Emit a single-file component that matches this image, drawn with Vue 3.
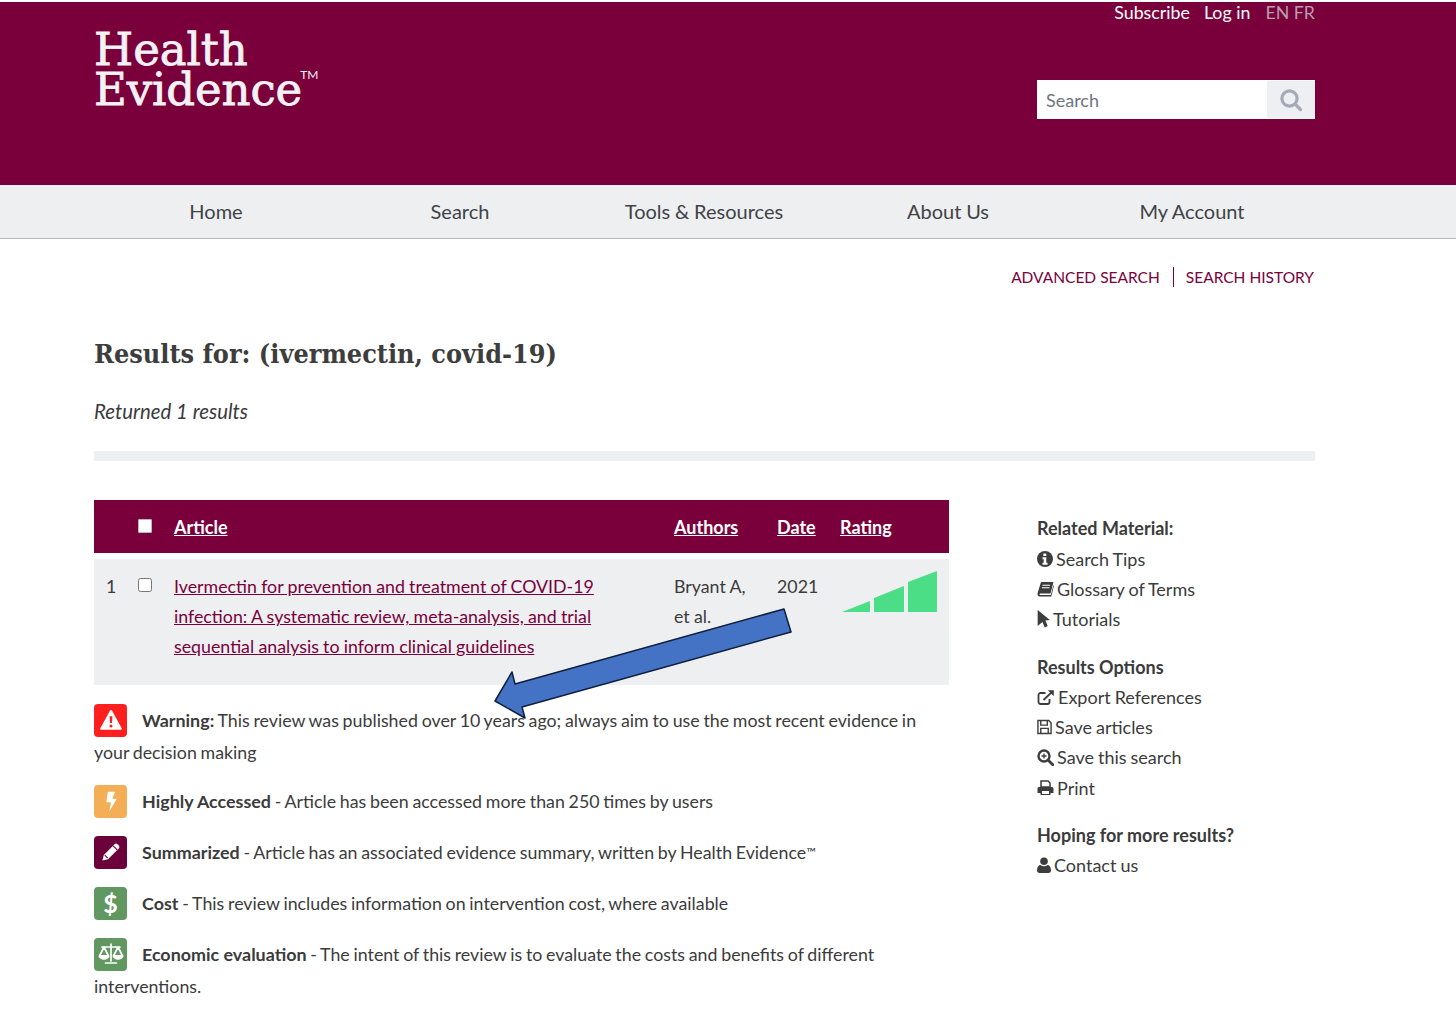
<script setup>
const navItems = ['Home', 'Search', 'Tools & Resources', 'About Us', 'My Account']
</script>

<template>
  <div class="page">
    <header class="masthead">
      <div class="masthead-inner">
        <div class="logo">
          <span class="logo-line">Health</span>
          <span class="logo-line">Evidence<sup class="tm">TM</sup></span>
        </div>
        <div class="masthead-tools">
          <div class="toplinks">
            <a class="toplink">Subscribe</a>
            <a class="toplink">Log in</a>
            <span class="lang">EN FR</span>
          </div>
          <div class="searchbox">
            <span class="searchbox-input">Search</span>
            <span class="searchbox-btn">
              <svg width="24" height="24" viewBox="0 0 24 24" fill="none" stroke="#a5a9b8" stroke-width="3.2" stroke-linecap="round"><circle cx="10.5" cy="10.5" r="7.6"/><path d="M16.2 16.2 21.5 21.5"/></svg>
            </span>
          </div>
        </div>
      </div>
    </header>

    <nav class="mainnav">
      <a v-for="item in navItems" :key="item" class="mainnav-item">{{ item }}</a>
    </nav>

    <main class="content">
      <div class="sublinks">
        <a class="sublink first">ADVANCED SEARCH</a>
        <a class="sublink">SEARCH HISTORY</a>
      </div>
      <h1 class="title">Results for: (ivermectin, covid-19)</h1>
      <p class="returned">Returned 1 results</p>
      <div class="rule"></div>

      <div class="columns">
        <section class="results">
          <div class="thead">
            <span class="col-num"></span>
            <span class="col-check"><span class="box box-head"></span></span>
            <a class="col-article">Article</a>
            <a class="col-authors">Authors</a>
            <a class="col-date">Date</a>
            <a class="col-rating">Rating</a>
          </div>
          <div class="trow">
            <span class="col-num">1</span>
            <span class="col-check"><span class="box"></span></span>
            <a class="col-article article-link">Ivermectin for prevention and treatment of COVID-19 infection: A systematic review, meta-analysis, and trial sequential analysis to inform clinical guidelines</a>
            <span class="col-authors">Bryant A, et al.</span>
            <span class="col-date">2021</span>
            <span class="col-rating">
              <svg class="rating" width="97" height="44" viewBox="0 0 97 44">
                <path d="M0 42 28 31V42Z" fill="#4cdd87"/>
                <path d="M32 28 62 16V42H32Z" fill="#4cdd87"/>
                <path d="M66 12 95 1V42H66Z" fill="#4cdd87"/>
              </svg>
            </span>
          </div>

          <div class="legend">
            <p class="legend-item">
              <span class="badge red"><svg viewBox="0 0 24 24" width="26" height="26"><path d="M12 3.800 21 20H3Z" fill="#fff" stroke="#fff" stroke-width="2" stroke-linejoin="round"/><path d="M10.700 8.600h2.600l-.4 6.200h-1.800Z" fill="#ff1f1f"/><circle cx="12" cy="17.500" r="1.400" fill="#ff1f1f"/></svg></span><strong>Warning:</strong> This review was published over 10 years ago; always aim to use the most recent evidence in your decision making
            </p>
            <p class="legend-item">
              <span class="badge orange"><svg viewBox="0 0 24 24" width="28" height="28"><path d="M9.300 4h6.200l-2.400 6h3.900l-6.500 11 1.500-8H8Z" fill="#fff"/></svg></span><strong>Highly Accessed</strong> - Article has been accessed more than 250 times by users
            </p>
            <p class="legend-item">
              <span class="badge maroon"><svg viewBox="0 0 24 24" width="24" height="24"><path d="M3.400 20.600 4.800 15 15.600 4.200a2 2 0 0 1 2.800 0l1.400 1.400a2 2 0 0 1 0 2.800L9 19.200Z" fill="#fff"/><path d="M14.200 5.800 18.200 9.800M5.800 15.200l3 3" stroke="#6b003a" stroke-width="1.100" fill="none"/></svg></span><strong>Summarized</strong> - Article has an associated evidence summary, written by Health Evidence<span class="tm-small">™</span>
            </p>
            <p class="legend-item">
              <span class="badge green"><span class="dollar">$</span></span><strong>Cost</strong> - This review includes information on intervention cost, where available
            </p>
            <p class="legend-item">
              <span class="badge green"><svg viewBox="0 0 28 28" width="28" height="28" fill="none" stroke="#fff" stroke-width="1.700" stroke-linecap="round" stroke-linejoin="round"><path d="M14 4v17M8.500 23h11M5 7h18M7 7 2.500 16h9ZM21 7l-4.500 9h9Z"/><path d="M2.500 16a4.500 3 0 0 0 9 0ZM16.500 16a4.500 3 0 0 0 9 0Z" fill="#fff"/></svg></span><strong>Economic evaluation</strong> - The intent of this review is to evaluate the costs and benefits of different interventions.
            </p>
          </div>
        </section>

        <aside class="side">
          <div class="side-group">
            <h3 class="side-title first-title">Related Material:</h3>
            <a class="side-link">
              <svg class="ic" width="16" height="16" viewBox="0 0 16 16"><circle cx="8" cy="8" r="8" fill="#3d3d3d"/><rect x="6.300" y="2.400" width="3" height="2.600" rx=".5" fill="#fff"/><path d="M5.500 6.300h3.800v5.400h1.200v2h-5v-2h1.200V8.300H5.500Z" fill="#fff"/></svg>Search Tips
            </a>
            <a class="side-link">
              <svg class="ic" width="17" height="16" viewBox="0 0 17 16"><path d="M4 1h12.500l-3 11.500H3.200c-.9 0-1 1.600 0 1.600h10.600l2.700-10 .4 1-2.600 10.400H2.500C.7 15.500.2 13.600.6 12Z" fill="#3d3d3d"/><path d="M5.500 4.200h7.500M4.900 6.800h7.500" stroke="#fff" stroke-width="1.100"/></svg>Glossary of Terms
            </a>
            <a class="side-link">
              <svg class="ic" width="13" height="18" viewBox="0 0 12 17"><path d="M.5 0 12 9.500 7.800 10 10 15 7.200 16.500 5 11.300 .5 15Z" fill="#3d3d3d"/></svg>Tutorials
            </a>
          </div>
          <div class="side-group options">
            <h3 class="side-title">Results Options</h3>
            <a class="side-link">
              <svg class="ic" width="18" height="17" viewBox="0 0 18 16" fill="none" stroke="#3d3d3d" stroke-width="1.800"><path d="M12.500 9.500v3a2 2 0 0 1-2 2h-7a2 2 0 0 1-2-2v-7a2 2 0 0 1 2-2h5"/><path d="M6.500 10.500 15.500 2"/><path d="M10.800 .8h6v6Z" fill="#3d3d3d" stroke="none"/></svg>Export References
            </a>
            <a class="side-link">
              <svg class="ic" width="15" height="16" viewBox="0 0 16 16" fill="none" stroke="#3d3d3d" stroke-width="1.500"><path d="M1 1h11.500L15 3.500V15H1Z"/><path d="M4 1v5h7V1M4 15V9.500h8V15"/></svg>Save articles
            </a>
            <a class="side-link">
              <svg class="ic" width="17" height="17" viewBox="0 0 17 17" fill="none" stroke="#3d3d3d"><circle cx="7" cy="7" r="5.500" stroke-width="2.400"/><path d="M11.500 11.500 15.800 15.800" stroke-width="2.800" stroke-linecap="round"/><path d="M4.500 7h5M7 4.500v5" stroke-width="1.300"/></svg>Save this search
            </a>
            <a class="side-link">
              <svg class="ic" width="17" height="16" viewBox="0 0 17 16"><path d="M4 1h7l2 2v4H4Z" fill="none" stroke="#3d3d3d" stroke-width="1.500"/><path d="M0.500 8.500a1.500 1.500 0 0 1 1.500-1.500h13a1.500 1.500 0 0 1 1.500 1.500V13h-3v2h-10v-2h-3Z" fill="#3d3d3d"/><path d="M5 11h7v3H5Z" fill="#fff"/></svg>Print
            </a>
          </div>
          <div class="side-group">
            <h3 class="side-title">Hoping for more results?</h3>
            <a class="side-link">
              <svg class="ic" width="14" height="16" viewBox="0 0 14 16"><circle cx="7" cy="4.200" r="3.800" fill="#3d3d3d"/><path d="M0 13.500C0 10 1.500 8 3.500 8c1 .8 2.200 1.200 3.500 1.200S9.500 8.800 10.500 8C12.500 8 14 10 14 13.500 14 15 13 16 11.500 16h-9C1 16 0 15 0 13.500Z" fill="#3d3d3d"/></svg>Contact us
            </a>
          </div>
        </aside>
      </div>

      <svg class="arrow" width="320" height="130" viewBox="0 0 320 130">
        <path d="M290 3 297 26 28 101 31 112 1 95 18 66 21 78Z" fill="#4472c4" stroke="#0e1f3d" stroke-width="1.500" stroke-linejoin="round"/>
      </svg>
    </main>
  </div>
</template>

<style scoped>
.page {
  position: relative;
  width: 1456px;
  height: 1012px;
  overflow: hidden;
  padding-top: 2px;
  box-sizing: border-box;
  font-family: Lato, "Liberation Sans", sans-serif;
  font-size: 18px;
  color: #3b3b3b;
  background: #fff;
}
.masthead {
  height: 183px;
  background: #7a003c;
}
.masthead-inner {
  width: 1221px;
  margin-left: 94px;
  display: flex;
  justify-content: space-between;
}
.logo {
  display: flex;
  flex-direction: column;
  padding-top: 28px;
  font-family: "DejaVu Serif", serif;
  color: #f2f2f4;
  font-size: 45px;
  line-height: 40px;
  letter-spacing: -0.1px;
  -webkit-text-stroke: 0.8px #f2f2f4;
}
.logo-line {
  display: block;
}
.tm {
  font-family: Lato, sans-serif;
  font-size: 12px;
  line-height: 0;
  vertical-align: 26px;
  letter-spacing: 0;
  -webkit-text-stroke: 0;
  margin-left: -2px;
}
.masthead-tools {
  width: 278px;
  display: flex;
  flex-direction: column;
}
.toplinks {
  height: 78px;
  display: flex;
  justify-content: flex-end;
  gap: 14px;
  font-size: 17.800px;
  line-height: 21px;
  color: #fff;
}
.lang {
  margin-left: 1px;
  color: #b5a0ac;
}
.searchbox {
  height: 39px;
  display: flex;
  background: #fff;
}
.searchbox-input {
  flex: 1;
  padding-left: 9px;
  line-height: 41px;
  color: #6d7580;
}
.searchbox-btn {
  width: 48px;
  background: #eeeff2;
  display: flex;
  align-items: center;
  justify-content: center;
  margin: 1px 0;
}
.mainnav {
  height: 53px;
  background: #eeeff1;
  border-bottom: 1px solid #b4b6b9;
  padding-left: 94px;
  display: flex;
}
.mainnav-item {
  width: 244px;
  text-align: center;
  line-height: 53px;
  font-size: 20px;
  word-spacing: -0.3px;
  color: #3f4347;
}
.content {
  padding: 0 141px 0 94px;
}
.sublinks {
  display: flex;
  justify-content: flex-end;
  margin-top: 28px;
  padding-right: 1px;
  height: 20px;
  font-size: 15.500px;
  line-height: 20px;
  color: #7a003c;
}
.sublink.first {
  padding-right: 13px;
  border-right: 1px solid #7a003c;
  margin-right: 12px;
}
.title {
  margin: 49px 0 0;
  font-family: "DejaVu Serif", serif;
  font-stretch: condensed;
  font-size: 26.750px;
  font-weight: 700;
  line-height: 36px;
  color: #3d3d3d;
}
.returned {
  margin: 24px 0 0;
  font-style: italic;
  font-size: 20.400px;
  line-height: 30px;
}
.rule {
  height: 10px;
  margin-top: 25px;
  background: #eeeff1;
}
.columns {
  display: flex;
  justify-content: space-between;
  margin-top: 39px;
}
.results {
  width: 855px;
}
.thead, .trow {
  display: grid;
  grid-template-columns: 44px 36px 500px 103px 63px 109px;
}
.thead {
  height: 53px;
  align-items: center;
  background: #7a003c;
  color: #fff;
  font-weight: 700;
}
.thead a {
  text-decoration: underline;
}
.trow {
  margin-top: 6px;
  height: 126px;
  background: #eeeff1;
  line-height: 30px;
  font-size: 17.800px;
  word-spacing: -0.3px;
  padding-top: 12px;
  box-sizing: border-box;
}
.col-num {
  padding-left: 12px;
}
.col-article {
  padding-right: 60px;
}
.col-authors {
  padding-right: 25px;
}
.article-link {
  color: #7a003c;
  text-decoration: underline;
}
.col-check {
  display: flex;
}
.box {
  display: block;
  width: 14px;
  height: 14px;
  box-sizing: border-box;
  border: 1px solid #767676;
  border-radius: 2.500px;
  background: #fff;
  margin-top: 7px;
}
.box-head {
  margin-top: 0;
  margin-bottom: 2px;
  border-color: #b9b9b9;
  border-radius: 1px;
}
.rating {
  display: block;
  margin: -1px 0 0 2px;
}
.legend {
  margin-top: 19px;
}
.legend-item {
  margin: 0 0 19px;
  font-size: 17.800px;
  word-spacing: -0.8px;
  line-height: 32px;
}
.legend-item:first-child {
  margin-bottom: 17px;
}
.legend-item strong {
  font-size: 17.900px;
  font-weight: 700;
  word-spacing: 0;
}
.badge {
  display: inline-flex;
  align-items: center;
  justify-content: center;
  width: 33px;
  height: 33px;
  border-radius: 4px;
  margin: -8.500px 15px -3.500px 0;
  vertical-align: middle;
  color: #fff;
}
.red { background: #ff1f1f; }
.orange { background: #f4ae55; }
.maroon { background: #6b003a; }
.green { background: #619862; }
.dollar {
  font-weight: 700;
  font-size: 25px;
  line-height: 1;
}
.tm-small {
  font-size: 13px;
  vertical-align: 2px;
}
.side {
  width: 278px;
  padding-top: 13px;
}
.side-group {
  margin-bottom: 18px;
}
.side-group.options {
  margin-bottom: 17.500px;
}
.side-title {
  margin: 0;
  font-size: 18px;
  font-weight: 700;
  line-height: 30px;
}
.first-title {
  margin-bottom: 1px;
}
.side-link {
  display: flex;
  align-items: center;
  height: 30px;
  gap: 3px;
  word-spacing: -0.6px;
}
.options .side-link {
  height: 30.200px;
}
.ic {
  flex: none;
}
.arrow {
  position: absolute;
  left: 494px;
  top: 606px;
}
</style>
